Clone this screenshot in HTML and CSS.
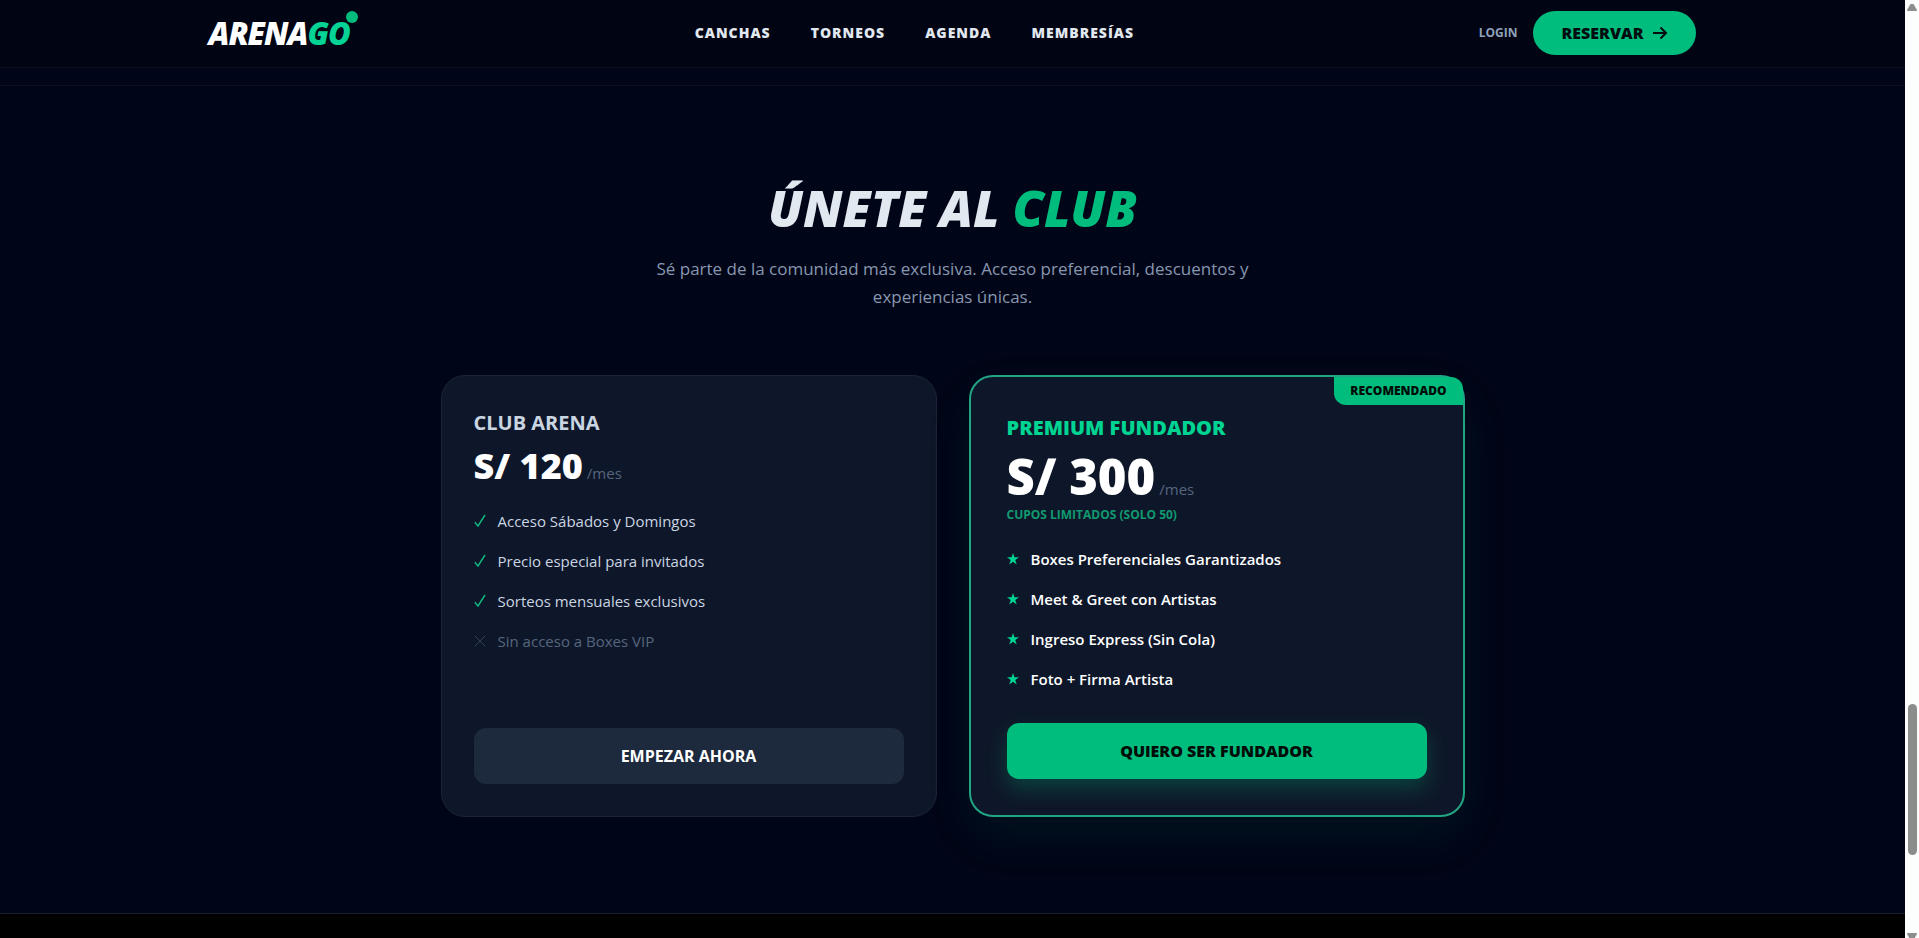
FILE: index.html
```html
<!DOCTYPE html>
<html lang="es">
<head>
<meta charset="utf-8">
<meta name="viewport" content="width=device-width, initial-scale=1">
<title>ArenaGo – Membresías</title>
<link rel="stylesheet" href="styles.css">
</head>
<body>
<svg class="sprite" aria-hidden="true">
  <symbol id="check" viewBox="0 0 12 14"><path d="M.8 8.2 4 12 11 1" fill="none" stroke="currentColor" stroke-width="1.4"/></symbol>
  <symbol id="cross" viewBox="0 0 12 14"><path d="M.8 1.8 11.2 12.2M11.2 1.8.8 12.2" fill="none" stroke="currentColor" stroke-width="1"/></symbol>
  <symbol id="star" viewBox="0 0 12 12"><path d="M6 0 7.4 4.3H12L8.3 7 9.7 11.4 6 8.7 2.3 11.4 3.7 7 0 4.3H4.6Z" fill="currentColor"/></symbol>
</svg>
<div class="page">
  <header class="header">
    <div class="header-inner">
      <a class="logo" href="#">ARENA<span class="logo-go">GO</span><span class="logo-dot"></span></a>
      <nav class="nav">
        <a href="#">CANCHAS</a>
        <a href="#">TORNEOS</a>
        <a href="#">AGENDA</a>
        <a href="#">MEMBRESÍAS</a>
      </nav>
      <div class="actions">
        <a class="login" href="#">LOGIN</a>
        <button class="reserve" type="button">RESERVAR
          <svg width="16" height="14" viewBox="0 0 16 14" fill="none" stroke="currentColor" stroke-width="2" aria-hidden="true"><path d="M1 7H14M8.5 1.5 14 7 8.5 12.5"/></svg>
        </button>
      </div>
    </div>
  </header>
  <main>
    <section class="club">
      <h1 class="club-title">ÚNETE AL <span>CLUB</span></h1>
      <p class="club-lead">Sé parte de la comunidad más exclusiva. Acceso preferencial, descuentos y experiencias únicas.</p>
      <div class="plans">
        <article class="plan">
          <h2 class="plan-name">CLUB ARENA</h2>
          <p class="price">S/ 120 <span>/mes</span></p>
          <ul class="features">
            <li><svg class="mark"><use href="#check"/></svg>Acceso Sábados y Domingos</li>
            <li><svg class="mark"><use href="#check"/></svg>Precio especial para invitados</li>
            <li><svg class="mark"><use href="#check"/></svg>Sorteos mensuales exclusivos</li>
            <li class="off"><svg class="mark"><use href="#cross"/></svg>Sin acceso a Boxes VIP</li>
          </ul>
          <button class="cta" type="button">EMPEZAR AHORA</button>
        </article>
        <article class="plan plan-premium">
          <span class="tag">RECOMENDADO</span>
          <h2 class="plan-name">PREMIUM FUNDADOR</h2>
          <p class="price">S/ 300 <span>/mes</span></p>
          <p class="limit">CUPOS LIMITADOS (SOLO 50)</p>
          <ul class="features">
            <li><svg class="mark"><use href="#star"/></svg>Boxes Preferenciales Garantizados</li>
            <li><svg class="mark"><use href="#star"/></svg>Meet &amp; Greet con Artistas</li>
            <li><svg class="mark"><use href="#star"/></svg>Ingreso Express (Sin Cola)</li>
            <li><svg class="mark"><use href="#star"/></svg>Foto + Firma Artista</li>
          </ul>
          <button class="cta" type="button">QUIERO SER FUNDADOR</button>
        </article>
      </div>
    </section>
  </main>
  <footer class="footer"></footer>
</div>
<div class="scrollbar" aria-hidden="true">
  <span class="arrow-up"></span>
  <span class="thumb"></span>
  <span class="arrow-down"></span>
</div>
</body>
</html>
```
FILE: styles.css
```css
* { box-sizing: border-box; margin: 0; padding: 0; }

body {
  display: flex;
  height: 100vh;
  overflow: hidden;
  background: #000517;
  color: #e2e8f0;
  font-family: "Open Sans", "Noto Sans", sans-serif;
  font-size: 15px;
  line-height: 24px;
}

a { color: inherit; text-decoration: none; }
button { font: inherit; border: 0; cursor: pointer; }
ul { list-style: none; }
.sprite { position: absolute; width: 0; height: 0; }

.page { flex: 1; display: flex; flex-direction: column; }

.logo, .club-title, .price, .reserve, .tag, .plan-premium .plan-name, .plan-premium .cta {
  font-weight: 800;
}

.header { background: #000413; border-bottom: 1px solid #0d1120; }
.header-inner {
  display: flex;
  align-items: center;
  justify-content: space-between;
  max-width: 1536px;
  margin: 0 auto;
  padding: 11px 24px 12px;
}
.logo {
  position: relative;
  color: #fff;
  font-size: 31px;
  font-style: italic;
  letter-spacing: -1px;
  line-height: 44px;
}
.logo-go { color: #05d295; }
.logo-dot {
  position: absolute;
  top: 0;
  right: -8px;
  width: 12px;
  height: 12px;
  border-radius: 50%;
  background: #00bc7d;
}
.nav { display: flex; gap: 40px; font-size: 14px; font-weight: 800; letter-spacing: 1px; }
.actions { display: flex; align-items: center; justify-content: flex-end; gap: 16px; }
.login { color: #90a1b9; font-size: 12px; font-weight: 700; }
.reserve {
  display: flex;
  align-items: center;
  gap: 9px;
  height: 44px;
  padding: 0 28px;
  border-radius: 22px;
  background: #00bc7d;
  color: #000c10;
  font-size: 16px;
}

main { flex: none; margin-top: 17px; }
.club { padding: 96px 24px; border-top: 1px solid #0c101f; }
.club-title {
  margin-bottom: 20px;
  text-align: center;
  font-size: 50px;
  font-style: italic;
  line-height: 53px;
}
.club-title span { color: #00bc7d; }
.club-lead {
  max-width: 620px;
  margin: 0 auto 64px;
  text-align: center;
  color: #8897b0;
  font-size: 17px;
  line-height: 28px;
}

.plans {
  display: grid;
  grid-template-columns: 1fr 1fr;
  gap: 32px;
  max-width: 1024px;
  margin: 0 auto;
}
.plan {
  position: relative;
  display: flex;
  flex-direction: column;
  padding: 32px;
  border: 1px solid #1b2436;
  border-radius: 24px;
  background: #0e1729;
}
.plan-name { margin-bottom: 8px; color: #cad5e2; font-size: 20px; font-weight: 700; line-height: 30px; }
.price {
  display: flex;
  align-items: baseline;
  gap: 4px;
  margin-bottom: 23px;
  color: #fff;
  font-size: 36px;
  line-height: 40px;
}
.price span { color: #56657f; font-size: 15px; font-weight: 400; line-height: 16px; }
.features { display: grid; gap: 16px; margin-bottom: 32px; color: #cad5e2; }
.features li { display: flex; align-items: center; gap: 12px; }
.features .off { color: #56657f; }
.mark { width: 12px; height: 14px; color: #12b981; }
.off .mark { color: #344056; }
.cta {
  margin-top: auto;
  height: 56px;
  border-radius: 12px;
  background: #1d293d;
  color: #fff;
  font-size: 16px;
  font-weight: 700;
}

.plan-premium {
  padding: 36px;
  border: 2px solid #21a583;
  box-shadow: 0 20px 50px rgba(0, 188, 125, 0.08);
}
.plan-premium .plan-name { color: #00d492; }
.plan-premium .price { margin-bottom: 6px; font-size: 49px; line-height: 50px; }
.limit { margin-bottom: 24px; color: #109a70; font-size: 12px; font-weight: 700; line-height: 16px; }
.plan-premium .features { color: #fff; font-weight: 600; }
.plan-premium .mark { color: #00d492; }
.plan-premium .cta {
  background: #00bc7d;
  color: #000c08;
  box-shadow: 0 10px 20px rgba(0, 188, 125, 0.25);
}
.tag {
  position: absolute;
  top: 0;
  right: 0;
  padding: 6px 16px;
  border-radius: 0 12px 0 12px;
  background: #00bc7d;
  color: #000c08;
  font-size: 12px;
  line-height: 16px;
}

.footer { flex: 1; border-top: 1px solid #16202f; background: #000; }

.scrollbar {
  display: flex;
  flex-direction: column;
  align-items: center;
  width: 14px;
  padding-top: 4px;
  overflow: hidden;
  background: #fcfefd;
}
.arrow-up, .arrow-down {
  flex: none;
  width: 10px;
  height: 7px;
  background: #8b8d8b;
  clip-path: polygon(35% 0, 65% 0, 100% 85%, 95% 100%, 5% 100%, 0 85%);
}
.arrow-down { margin: auto 0 -2px; transform: rotate(180deg); }
.thumb { flex: none; width: 9px; height: 16.1vh; margin-top: 73.9vh; border-radius: 5px; background: #8b8d8b; }
```
